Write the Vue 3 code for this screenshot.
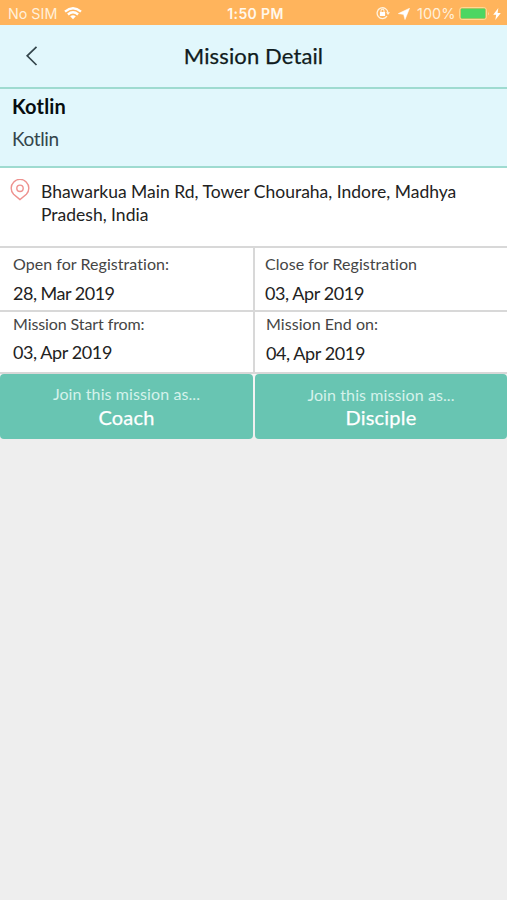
<script setup>
const dates = [
  { label: 'Open for Registration:', value: '28, Mar 2019', key: 'open' },
  { label: 'Close for Registration', value: '03, Apr 2019', key: 'close' },
  { label: 'Mission Start from:', value: '03, Apr 2019', key: 'start' },
  { label: 'Mission End on:', value: '04, Apr 2019', key: 'end' },
]
const roles = [
  { name: 'Coach', key: 'coach' },
  { name: 'Disciple', key: 'disciple' },
]
</script>

<template>
  <div class="screen">
    <div class="status">
      <div class="left">
        <span class="carrier">No SIM</span>
        <svg class="wifi" width="18" height="13" viewBox="0 0 18 13" fill="none" stroke="#fff" stroke-width="2.4">
          <path d="M1 4.6Q9-2 17 4.6" />
          <path d="M3.9 7.5Q9 3.2 14.1 7.5" />
          <path d="M6.2 9.3Q9 7 11.8 9.3L9 12.3Z" fill="#fff" stroke="none" />
        </svg>
      </div>
      <span class="clock">1:50 PM</span>
      <div class="right">
        <svg class="lock" width="14" height="14" viewBox="0 0 14 14" fill="none" stroke="#fff3df">
          <path d="M11 10.2A5.4 5.4 0 1 1 11.9 6.6" stroke-width="1.3" />
          <path d="M10 6.2h4l-2 2.7z" fill="#fff3df" stroke="none" />
          <rect x="3.9" y="6" width="5.2" height="4" fill="#fff" stroke="none" />
          <path d="M5 6V4.8a1.5 1.5 0 0 1 3 0V6" stroke-width="1.1" />
        </svg>
        <svg class="arrow" width="12" height="12" viewBox="0 0 12 12"><path d="M11.6 .2L7 11.6L5.6 6.4L.3 5.6z" fill="#fff" stroke="#fff" stroke-width=".5" /></svg>
        <span class="percent">100%</span>
        <svg class="battery" width="31" height="13" viewBox="0 0 31 13">
          <rect x=".6" y=".6" width="26.8" height="11.8" rx="2.6" fill="none" stroke="#ffdc9c" stroke-width="1" />
          <rect x="1.8" y="1.6" width="24.6" height="9.8" rx="1" fill="#4cd662" />
          <path d="M29 4.4q1.6 2 0 4.2z" fill="#ffe0a8" />
        </svg>
        <svg class="bolt" width="8" height="12" viewBox="0 0 8 12"><path d="M5.3 0L.2 6.7h3L2.3 12l5.5-7H4.6z" fill="#fff" /></svg>
      </div>
    </div>

    <header class="nav">
      <svg class="back" width="13" height="20" viewBox="0 0 13 20" fill="none" stroke="#33454b" stroke-width="1.7">
        <path d="M11.5 .8L2.2 9.8L11.5 19" />
      </svg>
      <h1>Mission Detail</h1>
    </header>

    <section class="summary">
      <h2>Kotlin</h2>
      <p>Kotlin</p>
    </section>

    <section class="place">
      <svg class="pin" width="20" height="22" viewBox="0 0 20 22" fill="none" stroke="#ee918e" stroke-width="1.4">
        <path d="M10 20.6L3.6 15.2A8.8 8.8 0 1 1 16.4 15.2Z" />
        <circle cx="10" cy="9.3" r="3.2" />
      </svg>
      <p><span class="line">Bhawarkua Main Rd, Tower Chouraha, Indore, Madhya</span> <span class="line">Pradesh, India</span></p>
    </section>

    <section class="dates">
      <div v-for="d in dates" :key="d.key" class="cell" :class="d.key">
        <span class="label">{{ d.label }}</span>
        <span class="value">{{ d.value }}</span>
      </div>
    </section>

    <div class="actions">
      <button v-for="r in roles" :key="r.key" :class="r.key">
        <span class="join">Join this mission as...</span>
        <span class="role">{{ r.name }}</span>
      </button>
    </div>
  </div>
</template>

<style>
body { margin: 0; background: #eeeeee; }
</style>

<style scoped>
.screen { width: 507px; height: 900px; overflow: hidden; background: #eee; font-family: Lato, sans-serif; font-variant-ligatures: none; color: #222; white-space: nowrap; }
h1, h2, p { margin: 0; font-weight: 400; }
svg { display: block; flex: none; }
.status { height: 25px; display: grid; grid-template-columns: 1fr auto 1fr; background: #ffb45c; color: #fff; font-family: Inter, sans-serif; line-height: 28px; }
.left, .right { display: flex; align-items: flex-start; }
.left { padding-left: 8px; }
.carrier { width: 49px; font-size: 14.3px; color: #fff0da; }
.wifi { margin: 7px 0 0 7px; }
.clock { font-size: 14px; font-weight: 600; letter-spacing: .35px; color: #fff8ec; padding-left: 4px; }
.right { justify-content: flex-end; padding-right: 6px; }
.lock { margin: 6px 8px 0 0; }
.arrow { margin: 8px 7px 0 0; }
.percent { width: 38px; font-size: 14.5px; color: #fff0da; margin-right: 4px; }
.battery { margin-top: 7px; }
.bolt { margin: 8px 0 0 3px; }
.nav { height: 62px; display: grid; grid-template-columns: 60px 1fr 60px; background: #e1f7fc; border-bottom: 2px solid #9edbd0; }
.back { margin: 21px 0 0 25px; }
h1 { text-align: center; font-size: 22px; letter-spacing: .12px; line-height: 62px; color: #101c20; -webkit-text-stroke: .25px currentColor; }
.summary { height: 77px; box-sizing: border-box; padding: 4px 12px 0; background: #e1f7fc; }
h2 { font-size: 20px; line-height: 26px; font-weight: 700; letter-spacing: .15px; color: #060d0f; }
.summary p { font-size: 19px; line-height: 26px; margin-top: 7px; letter-spacing: -.35px; color: #33454b; }
.place { height: 78px; display: flex; background: #fff; border-top: 2px solid #9edbd0; border-bottom: 2px solid #d8d8d8; }
.pin { margin: 11px 0 0 10px; }
.place p { margin: 12px 0 0 11px; font-size: 17.5px; line-height: 23px; }
.line { display: block; }
.dates { display: grid; grid-template-columns: 253px 1fr; grid-template-rows: 64px 62px; background: #fff; }
.cell { display: flex; flex-direction: column; box-sizing: border-box; padding: 6px 0 0 13px; border-bottom: 2px solid #d8d8d8; }
.close, .end { border-left: 2px solid #d8d8d8; padding-left: 10px; }
.start, .end { padding-top: 2px; }
.end { padding-left: 11px; }
.label { font-size: 16px; line-height: 20px; letter-spacing: .05px; color: #454545; }
.start .label { letter-spacing: -.1px; }
.value { font-size: 18px; line-height: 24px; margin-top: 7px; letter-spacing: -.4px; }
.open .value { letter-spacing: -.5px; }
.start .value { margin-top: 6px; }
.actions { display: grid; grid-template-columns: 253px 252px; gap: 2px; background: linear-gradient(#f5f5f5, #eee); }
button { height: 65px; border: 0; padding: 9px 0 0; border-radius: 4px; background: #68c5b2; color: #fff; font-family: inherit; display: flex; flex-direction: column; align-items: center; }
.join { font-size: 16px; line-height: 20px; letter-spacing: .1px; padding-top: 1px; color: #d5f2eb; }
.role { font-size: 20px; line-height: 26px; letter-spacing: .2px; -webkit-text-stroke: .25px currentColor; }
.disciple .join { padding-top: 2px; }
.disciple .role { margin-top: -1px; }
</style>
